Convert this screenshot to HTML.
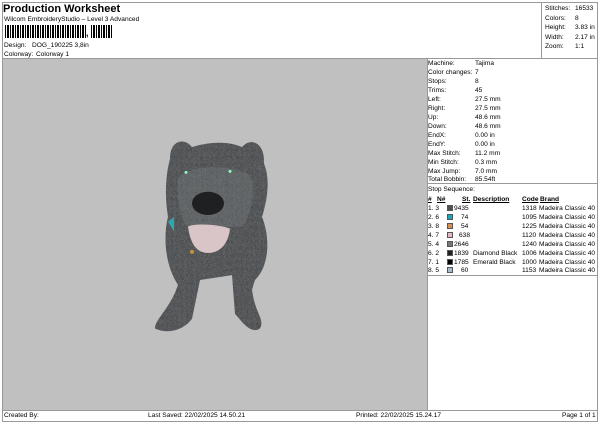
<!DOCTYPE html><html><head><style>
*{margin:0;padding:0;box-sizing:border-box}
body{width:600px;height:424px;background:#fff;font-family:"Liberation Sans",sans-serif;font-size:7px;color:#000;position:relative;overflow:hidden}
.a{position:absolute;white-space:nowrap}
.line{position:absolute;background:#999}
.bc{position:absolute;top:25px;height:13px;background:repeating-linear-gradient(90deg,#000 0 1px,#fff 1px 2px,#000 2px 4px,#fff 4px 5px,#000 5px 6px,#fff 6px 7px,#000 7px 9px,#fff 9px 10px)}
.r{position:absolute;left:428px;width:170px;height:9px;line-height:9px;white-space:nowrap;font-size:6.6px}
.r span{position:absolute;white-space:nowrap}
.sw{position:absolute;width:6px;height:6px;top:1px;border:1px solid #555}
</style></head><body>
<div class="line" style="left:2px;top:2px;width:596px;height:1px"></div>
<div class="line" style="left:2px;top:2px;width:1px;height:420px"></div>
<div class="line" style="left:597px;top:2px;width:1px;height:420px"></div>
<div class="line" style="left:2px;top:421px;width:596px;height:1px"></div>
<div class="line" style="left:2px;top:58px;width:596px;height:1px"></div>
<div class="line" style="left:2px;top:410px;width:596px;height:1px"></div>
<div class="line" style="left:541px;top:2px;width:1px;height:56px"></div>
<div class="line" style="left:427px;top:58px;width:1px;height:352px"></div>
<div class="line" style="left:427px;top:183px;width:171px;height:1px"></div>
<div class="line" style="left:427px;top:275px;width:171px;height:1px"></div>
<div class="a" style="left:3px;top:3px;font-size:11px;font-weight:bold">Production Worksheet</div>
<div class="a" style="left:4px;top:16px;font-size:6.6px">Wilcom EmbroideryStudio – Level 3 Advanced</div>
<div class="bc" style="left:5px;width:81px"></div>
<div class="a" style="left:86px;top:28px;font-size:9px;font-weight:bold">,</div>
<div class="bc" style="left:91px;width:21px"></div>
<div class="a" style="left:4px;top:42px;font-size:6.6px">Design:</div><div class="a" style="left:32px;top:42px;font-size:6.6px">DOG_190225 3,8in</div>
<div class="a" style="left:4px;top:51px;font-size:6.6px">Colorway:</div><div class="a" style="left:36px;top:51px;font-size:6.6px">Colorway 1</div>
<div class="a" style="left:545px;top:4px;line-height:9.5px;font-size:6.6px">Stitches:<br>Colors:<br>Height:<br>Width:<br>Zoom:</div>
<div class="a" style="left:575px;top:4px;line-height:9.5px;font-size:6.6px">16533<br>8<br>3.83 in<br>2.17 in<br>1:1</div>
<div class="a" style="left:3px;top:59px;width:424px;height:351px;background:#c0c0c0"></div>
<svg class="a" style="left:130px;top:120px" width="160" height="223" viewBox="0 0 160 230" preserveAspectRatio="none">
<defs><filter id="f"><feTurbulence baseFrequency="0.9" numOctaves="2" result="t"/><feColorMatrix in="t" type="matrix" values="0 0 0 0 0.3 0 0 0 0 0.31 0 0 0 0 0.32 0 0 0 0.6 0" result="c"/><feComposite in="c" in2="SourceGraphic" operator="in" result="m"/><feMerge><feMergeNode in="SourceGraphic"/><feMergeNode in="m"/></feMerge></filter></defs>
<g filter="url(#f)">
<path d="M40 40 C40 20 55 18 62 28 C80 22 100 22 112 28 C120 18 135 22 134 45 C140 60 138 80 132 100 C140 120 140 150 125 165 L122 175 C125 200 135 205 130 215 C120 222 110 205 105 200 L102 160 L70 165 L62 205 C55 215 40 222 25 215 C25 205 40 195 48 170 C35 150 33 120 38 100 C35 80 35 60 40 40Z" fill="#44474a"/>
<path d="M48 60 C60 45 110 45 122 60 C125 80 120 100 112 110 L58 112 C50 100 46 80 48 60Z" fill="#575a5c"/>
</g>
<ellipse cx="78" cy="86" rx="16" ry="12" fill="#1f2021"/>
<path d="M58 110 C65 106 90 108 100 112 C98 130 88 138 76 137 C65 136 60 125 58 110Z" fill="#d9c4c8"/>
<circle cx="56" cy="54" r="1.5" fill="#8fb"/><circle cx="100" cy="53" r="1.5" fill="#8fb"/>
<path d="M38 105 L44 100 L44 115 Z" fill="#2aa8b0"/>
<circle cx="62" cy="136" r="2" fill="#c8903f"/>
</svg>
<div class="r" style="top:59px"><span style="left:0">Machine:</span><span style="left:47px">Tajima</span></div>
<div class="r" style="top:68px"><span style="left:0">Color changes:</span><span style="left:47px">7</span></div>
<div class="r" style="top:77px"><span style="left:0">Stops:</span><span style="left:47px">8</span></div>
<div class="r" style="top:86px"><span style="left:0">Trims:</span><span style="left:47px">45</span></div>
<div class="r" style="top:95px"><span style="left:0">Left:</span><span style="left:47px">27.5 mm</span></div>
<div class="r" style="top:104px"><span style="left:0">Right:</span><span style="left:47px">27.5 mm</span></div>
<div class="r" style="top:113px"><span style="left:0">Up:</span><span style="left:47px">48.6 mm</span></div>
<div class="r" style="top:122px"><span style="left:0">Down:</span><span style="left:47px">48.6 mm</span></div>
<div class="r" style="top:131px"><span style="left:0">EndX:</span><span style="left:47px">0.00 in</span></div>
<div class="r" style="top:140px"><span style="left:0">EndY:</span><span style="left:47px">0.00 in</span></div>
<div class="r" style="top:149px"><span style="left:0">Max Stitch:</span><span style="left:47px">11.2 mm</span></div>
<div class="r" style="top:158px"><span style="left:0">Min Stitch:</span><span style="left:47px">0.3 mm</span></div>
<div class="r" style="top:167px"><span style="left:0">Max Jump:</span><span style="left:47px">7.0 mm</span></div>
<div class="r" style="top:175px"><span style="left:0">Total Bobbin:</span><span style="left:47px">85.54ft</span></div>
<div class="r" style="top:185px"><span style="left:0">Stop Sequence:</span></div>
<div class="r" style="top:195px;font-weight:bold"><span style="left:0;text-decoration:underline">#</span><span style="left:9px;text-decoration:underline">N#</span><span style="left:34px;text-decoration:underline">St.</span><span style="left:45px;text-decoration:underline">Description</span><span style="left:94px;text-decoration:underline">Code</span><span style="left:112px;text-decoration:underline">Brand</span></div>
<div class="r" style="top:204px"><span style="left:0">1. 3</span><span class="sw" style="left:19px;background:#505050"></span><span style="left:26px">9435</span><span style="left:94px">1318</span><span style="left:111px">Madeira Classic 40</span></div>
<div class="r" style="top:213px"><span style="left:0">2. 6</span><span class="sw" style="left:19px;background:#19a7c0"></span><span style="left:33px">74</span><span style="left:94px">1095</span><span style="left:111px">Madeira Classic 40</span></div>
<div class="r" style="top:222px"><span style="left:0">3. 8</span><span class="sw" style="left:19px;background:#d49050"></span><span style="left:33px">54</span><span style="left:94px">1225</span><span style="left:111px">Madeira Classic 40</span></div>
<div class="r" style="top:231px"><span style="left:0">4. 7</span><span class="sw" style="left:19px;background:#e8b8c8"></span><span style="left:31px">638</span><span style="left:94px">1120</span><span style="left:111px">Madeira Classic 40</span></div>
<div class="r" style="top:240px"><span style="left:0">5. 4</span><span class="sw" style="left:19px;background:#777"></span><span style="left:26px">2646</span><span style="left:94px">1240</span><span style="left:111px">Madeira Classic 40</span></div>
<div class="r" style="top:249px"><span style="left:0">6. 2</span><span class="sw" style="left:19px;background:#222"></span><span style="left:26px">1839</span><span style="left:45px">Diamond Black</span><span style="left:94px">1006</span><span style="left:111px">Madeira Classic 40</span></div>
<div class="r" style="top:258px"><span style="left:0">7. 1</span><span class="sw" style="left:19px;background:#000"></span><span style="left:26px">1785</span><span style="left:45px">Emerald Black</span><span style="left:94px">1000</span><span style="left:111px">Madeira Classic 40</span></div>
<div class="r" style="top:266px"><span style="left:0">8. 5</span><span class="sw" style="left:19px;background:#a8bccc"></span><span style="left:33px">60</span><span style="left:94px">1153</span><span style="left:111px">Madeira Classic 40</span></div>
<div class="a" style="left:4px;top:412px;font-size:6.6px">Created By:</div>
<div class="a" style="left:148px;top:412px;font-size:6.6px">Last Saved: 22/02/2025 14.50.21</div>
<div class="a" style="left:356px;top:412px;font-size:6.6px">Printed: 22/02/2025 15.24.17</div>
<div class="a" style="left:562px;top:412px;font-size:6.6px">Page 1 of 1</div>
</body></html>
